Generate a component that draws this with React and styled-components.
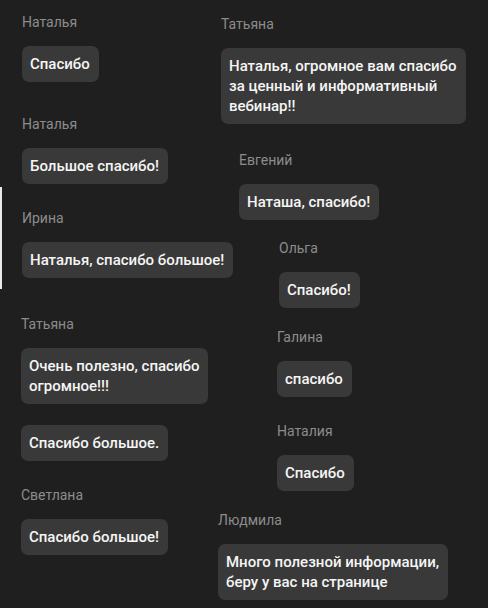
import React from 'react';
import styled, { createGlobalStyle } from 'styled-components';

const GlobalStyle = createGlobalStyle`
    html, body {
        margin: 0;
        padding: 0;
        background: #1f1f1f;
    }
    body {
        font-family: Roboto, "Liberation Sans", Arial, sans-serif;
    }
`

// left column, top to bottom
const leftMessages = [
    { top: 14, indent: 1, name: 'Наталья', lines: ['Спасибо'] },
    { top: 34, indent: 1, name: 'Наталья', lines: ['Большое спасибо!'] },
    { top: 26, indent: 1, name: 'Ирина', lines: ['Наталья, спасибо большое!'] },
    { top: 38, indent: 0, name: 'Татьяна', lines: ['Очень полезно, спасибо', 'огромное!!!'] },
    { top: 21, indent: 0, name: null, lines: ['Спасибо большое.'] },
    { top: 26, indent: 0, name: 'Светлана', lines: ['Спасибо большое!'] },
];

// right column, top to bottom
const rightMessages = [
    { top: 16, indent: 3, name: 'Татьяна', lines: ['Наталья, огромное вам спасибо', 'за ценный и информативный', 'вебинар!!'] },
    { top: 28, indent: 21, name: 'Евгений', lines: ['Наташа, спасибо!'] },
    { top: 20, indent: 61, name: 'Ольга', lines: ['Спасибо!'] },
    { top: 21, indent: 59, name: 'Галина', lines: ['спасибо'] },
    { top: 26, indent: 59, name: 'Наталия', lines: ['Спасибо'] },
    { top: 21, indent: 0, name: 'Людмила', lines: ['Много полезной информации,', 'беру у вас на странице'] },
];

const Message = ({ top, indent, name, lines }) => (
    <Item top={top} indent={indent}>
        {name && <Author>{name}</Author>}
        <Bubble>
            {lines.map((line, i) => (
                <React.Fragment key={i}>
                    {i > 0 && <br />}
                    {line}
                </React.Fragment>
            ))}
        </Bubble>
    </Item>
)

const App = () => {
    return (
        <>
            <GlobalStyle />
            <Board>
                <FocusEdge />
                <Column>
                    {leftMessages.map((m, i) => <Message key={i} {...m} />)}
                </Column>
                <Column>
                    {rightMessages.map((m, i) => <Message key={i} {...m} />)}
                </Column>
            </Board>
        </>
    )
}

export default App;

const Board = styled.div`
    position: relative;
    width: 488px;
    height: 608px;
    overflow: hidden;
    display: grid;
    grid-template-columns: 197px 1fr;
    padding-left: 21px;
    box-sizing: border-box;
    background: #1f1f1f;
`

const FocusEdge = styled.div`
    position: absolute;
    left: 0;
    top: 187px;
    width: 2px;
    height: 102px;
    background: #e9e9e9;
`

const Column = styled.div`
    display: flex;
    flex-direction: column;
    align-items: flex-start;
    min-width: 0;
`

const Item = styled.div.withConfig({ shouldForwardProp: p => p !== 'top' && p !== 'indent' })`
    display: flex;
    flex-direction: column;
    align-items: flex-start;
    margin-top: ${props => props.top}px;
    margin-left: ${props => props.indent}px;
`

const Author = styled.div`
    font-size: 14px;
    line-height: 16px;
    color: #8c8c8c;
    margin-bottom: 16px;
    white-space: nowrap;
`

const Bubble = styled.div`
    background: #393939;
    color: #f5f5f5;
    font-size: 15px;
    font-weight: 500;
    line-height: 20px;
    padding: 8px 9px 8px 8px;
    border-radius: 7px;
    white-space: nowrap;
`
